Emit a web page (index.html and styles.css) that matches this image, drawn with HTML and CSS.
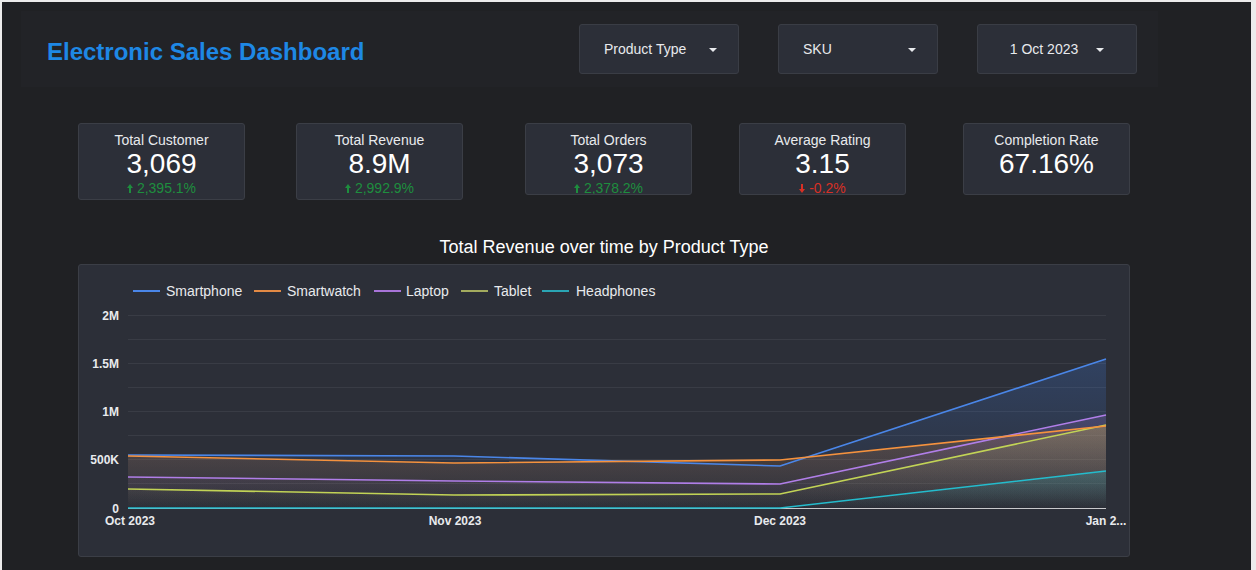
FILE: index.html
```html
<!DOCTYPE html>
<html>
<head>
<meta charset="utf-8">
<title>Electronic Sales Dashboard</title>
<link rel="stylesheet" href="styles.css">
</head>
<body>
<div class="page">
  <header class="header">
    <h1 class="title">Electronic Sales Dashboard</h1>
    <div class="filters">
      <div class="dropdown"><span class="dd-label">Product Type</span><span class="caret"></span></div>
      <div class="dropdown"><span class="dd-label">SKU</span><span class="caret"></span></div>
      <div class="dropdown dropdown-center"><span class="dd-label">1 Oct 2023</span><span class="caret"></span></div>
    </div>
  </header>

  <section class="kpis">
    <div class="kpi kpi-tall">
      <div class="kpi-title">Total Customer</div>
      <div class="kpi-value">3,069</div>
      <div class="kpi-delta up"><svg class="arrow" width="6" height="9" viewBox="0 0 6 9"><path d="M3 0 L6 4 L4 4 L4 9 L2 9 L2 4 L0 4 Z"/></svg>2,395.1%</div>
    </div>
    <div class="kpi kpi-tall gap1">
      <div class="kpi-title">Total Revenue</div>
      <div class="kpi-value">8.9M</div>
      <div class="kpi-delta up"><svg class="arrow" width="6" height="9" viewBox="0 0 6 9"><path d="M3 0 L6 4 L4 4 L4 9 L2 9 L2 4 L0 4 Z"/></svg>2,992.9%</div>
    </div>
    <div class="kpi gap2">
      <div class="kpi-title">Total Orders</div>
      <div class="kpi-value">3,073</div>
      <div class="kpi-delta up"><svg class="arrow" width="6" height="9" viewBox="0 0 6 9"><path d="M3 0 L6 4 L4 4 L4 9 L2 9 L2 4 L0 4 Z"/></svg>2,378.2%</div>
    </div>
    <div class="kpi gap3">
      <div class="kpi-title">Average Rating</div>
      <div class="kpi-value">3.15</div>
      <div class="kpi-delta down"><svg class="arrow" width="6" height="9" viewBox="0 0 6 9"><path d="M3 9 L6 5 L4 5 L4 0 L2 0 L2 5 L0 5 Z"/></svg>-0.2%</div>
    </div>
    <div class="kpi gap4">
      <div class="kpi-title">Completion Rate</div>
      <div class="kpi-value">67.16%</div>
    </div>
  </section>

  <section class="chart-section">
    <h2 class="chart-title">Total Revenue over time by Product Type</h2>
    <div class="chart-card">
      <svg class="chart" width="1050" height="291" viewBox="79 265 1050 291">
        <defs>
          <linearGradient id="gBlue" x1="0" y1="0" x2="0" y2="1"><stop offset="0" stop-color="#4285f4" stop-opacity="0.22"/><stop offset="1" stop-color="#4285f4" stop-opacity="0"/></linearGradient>
          <linearGradient id="gOrange" x1="0" y1="0" x2="0" y2="1"><stop offset="0" stop-color="#f5923e" stop-opacity="0.22"/><stop offset="1" stop-color="#f5923e" stop-opacity="0"/></linearGradient>
          <linearGradient id="gPurple" x1="0" y1="0" x2="0" y2="1"><stop offset="0" stop-color="#b07ee8" stop-opacity="0.18"/><stop offset="1" stop-color="#b07ee8" stop-opacity="0"/></linearGradient>
          <linearGradient id="gOlive" x1="0" y1="0" x2="0" y2="1"><stop offset="0" stop-color="#c2d356" stop-opacity="0.18"/><stop offset="1" stop-color="#c2d356" stop-opacity="0"/></linearGradient>
          <linearGradient id="gCyan" x1="0" y1="0" x2="0" y2="1"><stop offset="0" stop-color="#24bccd" stop-opacity="0.22"/><stop offset="1" stop-color="#24bccd" stop-opacity="0"/></linearGradient>
        </defs>

        <g class="legend">
          <line x1="133" y1="291" x2="160" y2="291" stroke="#4a86e8" stroke-width="2"/>
          <text x="166" y="296">Smartphone</text>
          <line x1="254" y1="291" x2="281" y2="291" stroke="#e38a45" stroke-width="2"/>
          <text x="287" y="296">Smartwatch</text>
          <line x1="374" y1="291" x2="401" y2="291" stroke="#a874d8" stroke-width="2"/>
          <text x="406" y="296">Laptop</text>
          <line x1="461" y1="291" x2="488" y2="291" stroke="#a3ab5e" stroke-width="2"/>
          <text x="494" y="296">Tablet</text>
          <line x1="542" y1="291" x2="569" y2="291" stroke="#2aa5b4" stroke-width="2"/>
          <text x="576" y="296">Headphones</text>
        </g>

        <g class="grid" stroke="#393c45" stroke-width="1">
          <line x1="128" y1="315.5" x2="1106" y2="315.5"/>
          <line x1="128" y1="339.5" x2="1106" y2="339.5"/>
          <line x1="128" y1="363.5" x2="1106" y2="363.5"/>
          <line x1="128" y1="387.5" x2="1106" y2="387.5"/>
          <line x1="128" y1="411.5" x2="1106" y2="411.5"/>
          <line x1="128" y1="435.5" x2="1106" y2="435.5"/>
          <line x1="128" y1="459.5" x2="1106" y2="459.5"/>
          <line x1="128" y1="483.5" x2="1106" y2="483.5"/>
        </g>

        <g class="areas">
          <path d="M128 455 L454 456 L780 466 L1106 359 L1106 508 L128 508 Z" fill="url(#gBlue)"/>
          <path d="M128 456 L454 463 L780 460 L1106 426 L1106 508 L128 508 Z" fill="url(#gOrange)"/>
          <path d="M128 477 L454 481 L780 484 L1106 415 L1106 508 L128 508 Z" fill="url(#gPurple)"/>
          <path d="M128 489 L454 495 L780 494 L1106 425 L1106 508 L128 508 Z" fill="url(#gOlive)"/>
          <path d="M128 508 L454 508 L780 508 L1106 471 L1106 508 L128 508 Z" fill="url(#gCyan)"/>
        </g>

        <line x1="128" y1="508.5" x2="1106" y2="508.5" stroke="#c8c9cc" stroke-width="1"/>

        <g class="lines" fill="none" stroke-width="1.6" stroke-linejoin="round">
          <polyline points="128,489 454,495 780,494 1106,425" stroke="#c2d356"/>
          <polyline points="128,477 454,481 780,484 1106,415" stroke="#b07ee8"/>
          <polyline points="128,455 454,456 780,466 1106,359" stroke="#4a86e8"/>
          <polyline points="128,456 454,463 780,460 1106,426" stroke="#f5923e"/>
          <polyline points="128,508 454,508 780,508 1106,471" stroke="#24bccd"/>
        </g>

        <g class="yaxis">
          <text x="119" y="319.5">2M</text>
          <text x="119" y="367.5">1.5M</text>
          <text x="119" y="416">1M</text>
          <text x="119" y="464">500K</text>
          <text x="119" y="512.5">0</text>
        </g>
        <g class="xaxis">
          <text x="130" y="524.5">Oct 2023</text>
          <text x="455" y="524.5">Nov 2023</text>
          <text x="780" y="524.5">Dec 2023</text>
          <text x="1106" y="524.5">Jan 2...</text>
        </g>
      </svg>
    </div>
  </section>
</div>
</body>
</html>
```

FILE: styles.css
```css
* { box-sizing: border-box; }

html, body {
  margin: 0;
  padding: 0;
}

body {
  background: #ececec;
  font-family: "Liberation Sans", Arial, sans-serif;
  color: #e8eaed;
  height: 570px;
  overflow: hidden;
}

.page {
  margin: 2px 5px 0 2px;
  height: 570px;
  background: #202124;
  overflow: hidden;
  display: flex;
  flex-direction: column;
}

.header {
  margin: 9px 0 0 19px;
  width: 1137px;
  height: 76px;
  background: #222327;
  display: flex;
  align-items: center;
  padding: 0 21px 0 26px;
}

.title {
  margin: 6px 0 0 0;
  font-size: 24px;
  font-weight: bold;
  color: #1e88e5;
  line-height: 28px;
}

.filters {
  margin-left: auto;
  display: flex;
  gap: 39px;
}

.dropdown {
  width: 160px;
  height: 50px;
  background: #2c2f38;
  border: 1px solid #3a3d45;
  border-radius: 3px;
  display: flex;
  align-items: center;
  justify-content: space-between;
  padding: 0 21px 0 24px;
  font-size: 14px;
  color: #e8eaed;
}

.dropdown-center {
  justify-content: center;
  gap: 18px;
  padding: 0;
}

.caret {
  width: 0;
  height: 0;
  border-left: 4px solid transparent;
  border-right: 4px solid transparent;
  border-top: 4px solid #e8eaed;
  margin-top: 1px;
}

.kpis {
  display: flex;
  align-items: flex-start;
  margin-top: 36px;
  padding-left: 76px;
}

.kpi {
  width: 167px;
  height: 72px;
  background: #2c2f38;
  border: 1px solid #3b3e46;
  border-radius: 3px;
  overflow: hidden;
  text-align: center;
  padding-top: 7px;
}

.kpi-tall { height: 77px; }

.gap1 { margin-left: 51px; }
.gap2 { margin-left: 62px; }
.gap3 { margin-left: 47px; }
.gap4 { margin-left: 57px; }

.kpi-title {
  font-size: 14px;
  line-height: 18px;
  color: #e8eaed;
}

.kpi-value {
  font-size: 28px;
  line-height: 28px;
  color: #ffffff;
  margin-top: 1px;
}

.kpi-delta {
  font-size: 14px;
  line-height: 18px;
  margin-top: 1px;
  display: flex;
  align-items: center;
  justify-content: center;
  gap: 4px;
}

.kpi-delta.up { color: #1e8e3e; }
.kpi-delta.down { color: #d93025; }
.kpi-delta.up .arrow { fill: #1e8e3e; }
.kpi-delta.down .arrow { fill: #d93025; }

.chart-section {
  margin-top: 36px;
  padding-left: 76px;
}

.chart-title {
  width: 1052px;
  margin: 0;
  text-align: center;
  font-size: 18px;
  font-weight: normal;
  line-height: 22px;
  color: #ffffff;
}

.chart-card {
  margin-top: 6px;
  width: 1052px;
  height: 293px;
  background: #2c2f38;
  border: 1px solid #3b3e46;
  border-radius: 3px;
  overflow: hidden;
}

.chart {
  display: block;
}

.legend text {
  font-family: "Liberation Sans", Arial, sans-serif;
  font-size: 14px;
  fill: #e8eaed;
}

.yaxis text {
  font-family: "Liberation Sans", Arial, sans-serif;
  font-size: 12px;
  font-weight: bold;
  fill: #e8eaed;
  text-anchor: end;
}

.xaxis text {
  font-family: "Liberation Sans", Arial, sans-serif;
  font-size: 12px;
  font-weight: bold;
  fill: #e8eaed;
  text-anchor: middle;
}
```
